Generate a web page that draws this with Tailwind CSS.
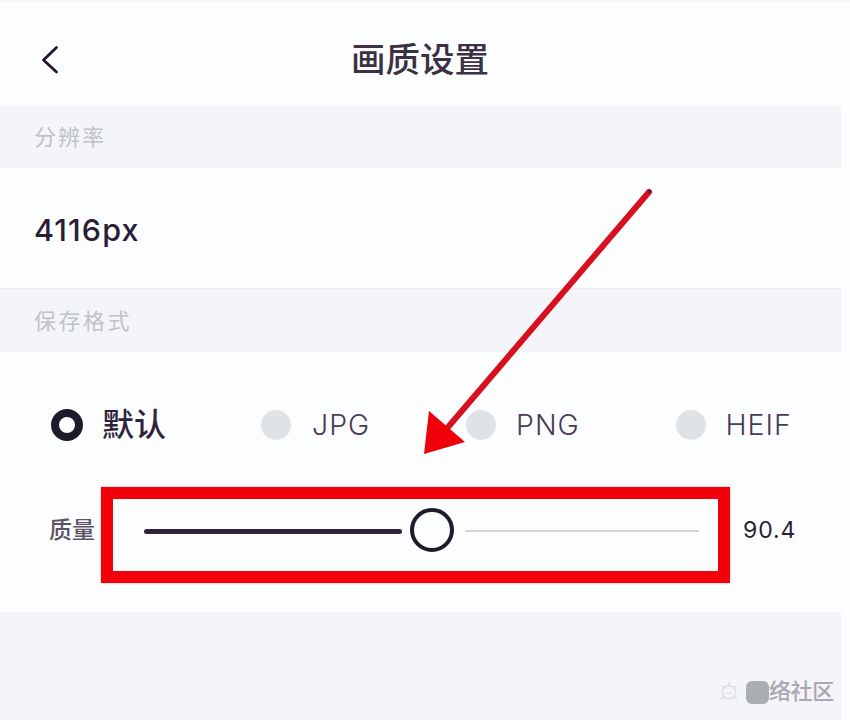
<!DOCTYPE html>
<html lang="zh-CN">
<head>
<meta charset="utf-8">
<title>画质设置</title>
<script src="https://cdn.jsdelivr.net/npm/@tailwindcss/browser@4"></script>
</head>
<body class="w-[850px] h-[720px] overflow-hidden bg-[#fcfdff] text-[#2a1d35] font-['Inter','Noto_Sans_CJK_SC',sans-serif]">
<main class="relative flex h-[720px] w-[850px] flex-col border-t-2 border-[#f3f5fb] pr-[9px]">
  <header class="grid h-[104px] shrink-0 grid-cols-[351px_1fr] items-center pb-2">
    <svg class="ml-[40px] mt-5 h-[30px] w-[20px]" viewBox="0 0 20 30" fill="none" stroke="#20152a" stroke-width="2.8" stroke-linecap="round" stroke-linejoin="round"><path d="M16.5 2.5 3.5 15l13 12"/></svg>
    <h1 class="mt-[20px] whitespace-nowrap text-[34.5px] leading-[40px] font-medium text-[#3a3142]">画质设置</h1>
  </header>
  <div class="flex h-[62px] shrink-0 items-center bg-[#f4f5f9] pl-[34px] text-[22px] tracking-[2px] text-[#c0c2c9]">分辨率</div>
  <div class="flex h-[120px] shrink-0 items-center pl-[34px] pt-[4px] text-[30.5px] font-medium tracking-[1.1px]">4116px</div>
  <div class="flex h-[64px] shrink-0 items-center border-t border-[#ebecf1] bg-[#f4f5f9] pl-[34px] pt-[2px] text-[22px] tracking-[2.5px] text-[#c0c2c9]">保存格式</div>
  <section class="h-[260px] shrink-0 pt-[48px]">
    <div class="grid h-[50px] grid-cols-[210px_205px_209.5px_1fr] items-center pl-[51px] text-[28.5px] font-light tracking-[1px] text-[#493a57]">
      <div class="flex items-center gap-[19px]"><i class="size-8 rounded-full border-[8.5px] border-[#1e1a2a] bg-white"></i><span class="whitespace-nowrap text-[32px] font-medium tracking-normal text-[#30243a]">默认</span></div>
      <div class="flex items-center gap-[21px]"><i class="size-[30px] rounded-full bg-[#e0e3e5]"></i><span>JPG</span></div>
      <div class="flex items-center gap-[20px]"><i class="size-[30px] rounded-full bg-[#dee3e8]"></i><span>PNG</span></div>
      <div class="flex items-center gap-[20px]"><i class="size-[30px] rounded-full bg-[#e0e3e5]"></i><span>HEIF</span></div>
    </div>
    <div class="mt-[37px] flex h-[96px] items-center">
      <span class="w-[101px] shrink-0 pl-[49px] pb-[10px] text-[23px] font-medium whitespace-nowrap text-[#5d5366]">质量</span>
      <div class="flex h-[96px] w-[629px] shrink-0 items-center border-[12px] border-[#f2000c] pl-[31px] shadow-[0_0_2px_#ffaaaa]">
        <span class="mb-2 h-[5px] w-[258px] rounded-full bg-[#30243a]"></span>
        <span class="mb-[10px] ml-[8px] size-[44px] shrink-0 rounded-full border-[4.5px] border-[#211a2b]"></span>
        <span class="mb-[8px] ml-[11px] h-[2px] w-[234px] bg-[#d0d5d8]"></span>
      </div>
      <span class="ml-[13px] pb-[10px] text-[23px] tracking-[0.9px]">90.4</span>
    </div>
  </section>
  <footer class="flex flex-1 items-end justify-end border-t border-[#f0f1f5] bg-[#f4f5f9] pb-[16px] pr-[7px]">
    <svg class="mr-[7px] mb-[3px] size-[20px]" viewBox="0 0 20 20" fill="none" stroke="#dddfe3" stroke-width="1.6"><circle cx="10" cy="11" r="6.5"/><path d="M10 1v5M3 5l3 3m11-3-3 3M7 12h6M2 18l3-2m13 2-3-2"/></svg>
    <span class="h-[23px] w-[23px] rounded-[6px] bg-[#aaaeb0]"></span>
    <span class="text-[22px] leading-[25px] font-medium tracking-[-0.3px] text-[#aaa5b0]">络社区</span>
  </footer>
  <svg class="pointer-events-none absolute left-0 -top-[2px] h-[720px] w-[850px]" viewBox="0 0 850 720">
    <path d="M649 192 449 426" stroke="#d80f1d" stroke-width="6" stroke-linecap="round"/>
    <circle cx="649.5" cy="191.5" r="2" fill="#542630"/>
    <path d="M429 411 465 442 424 454Z" fill="#f0000a"/>
  </svg>
</main>
</body>
</html>
